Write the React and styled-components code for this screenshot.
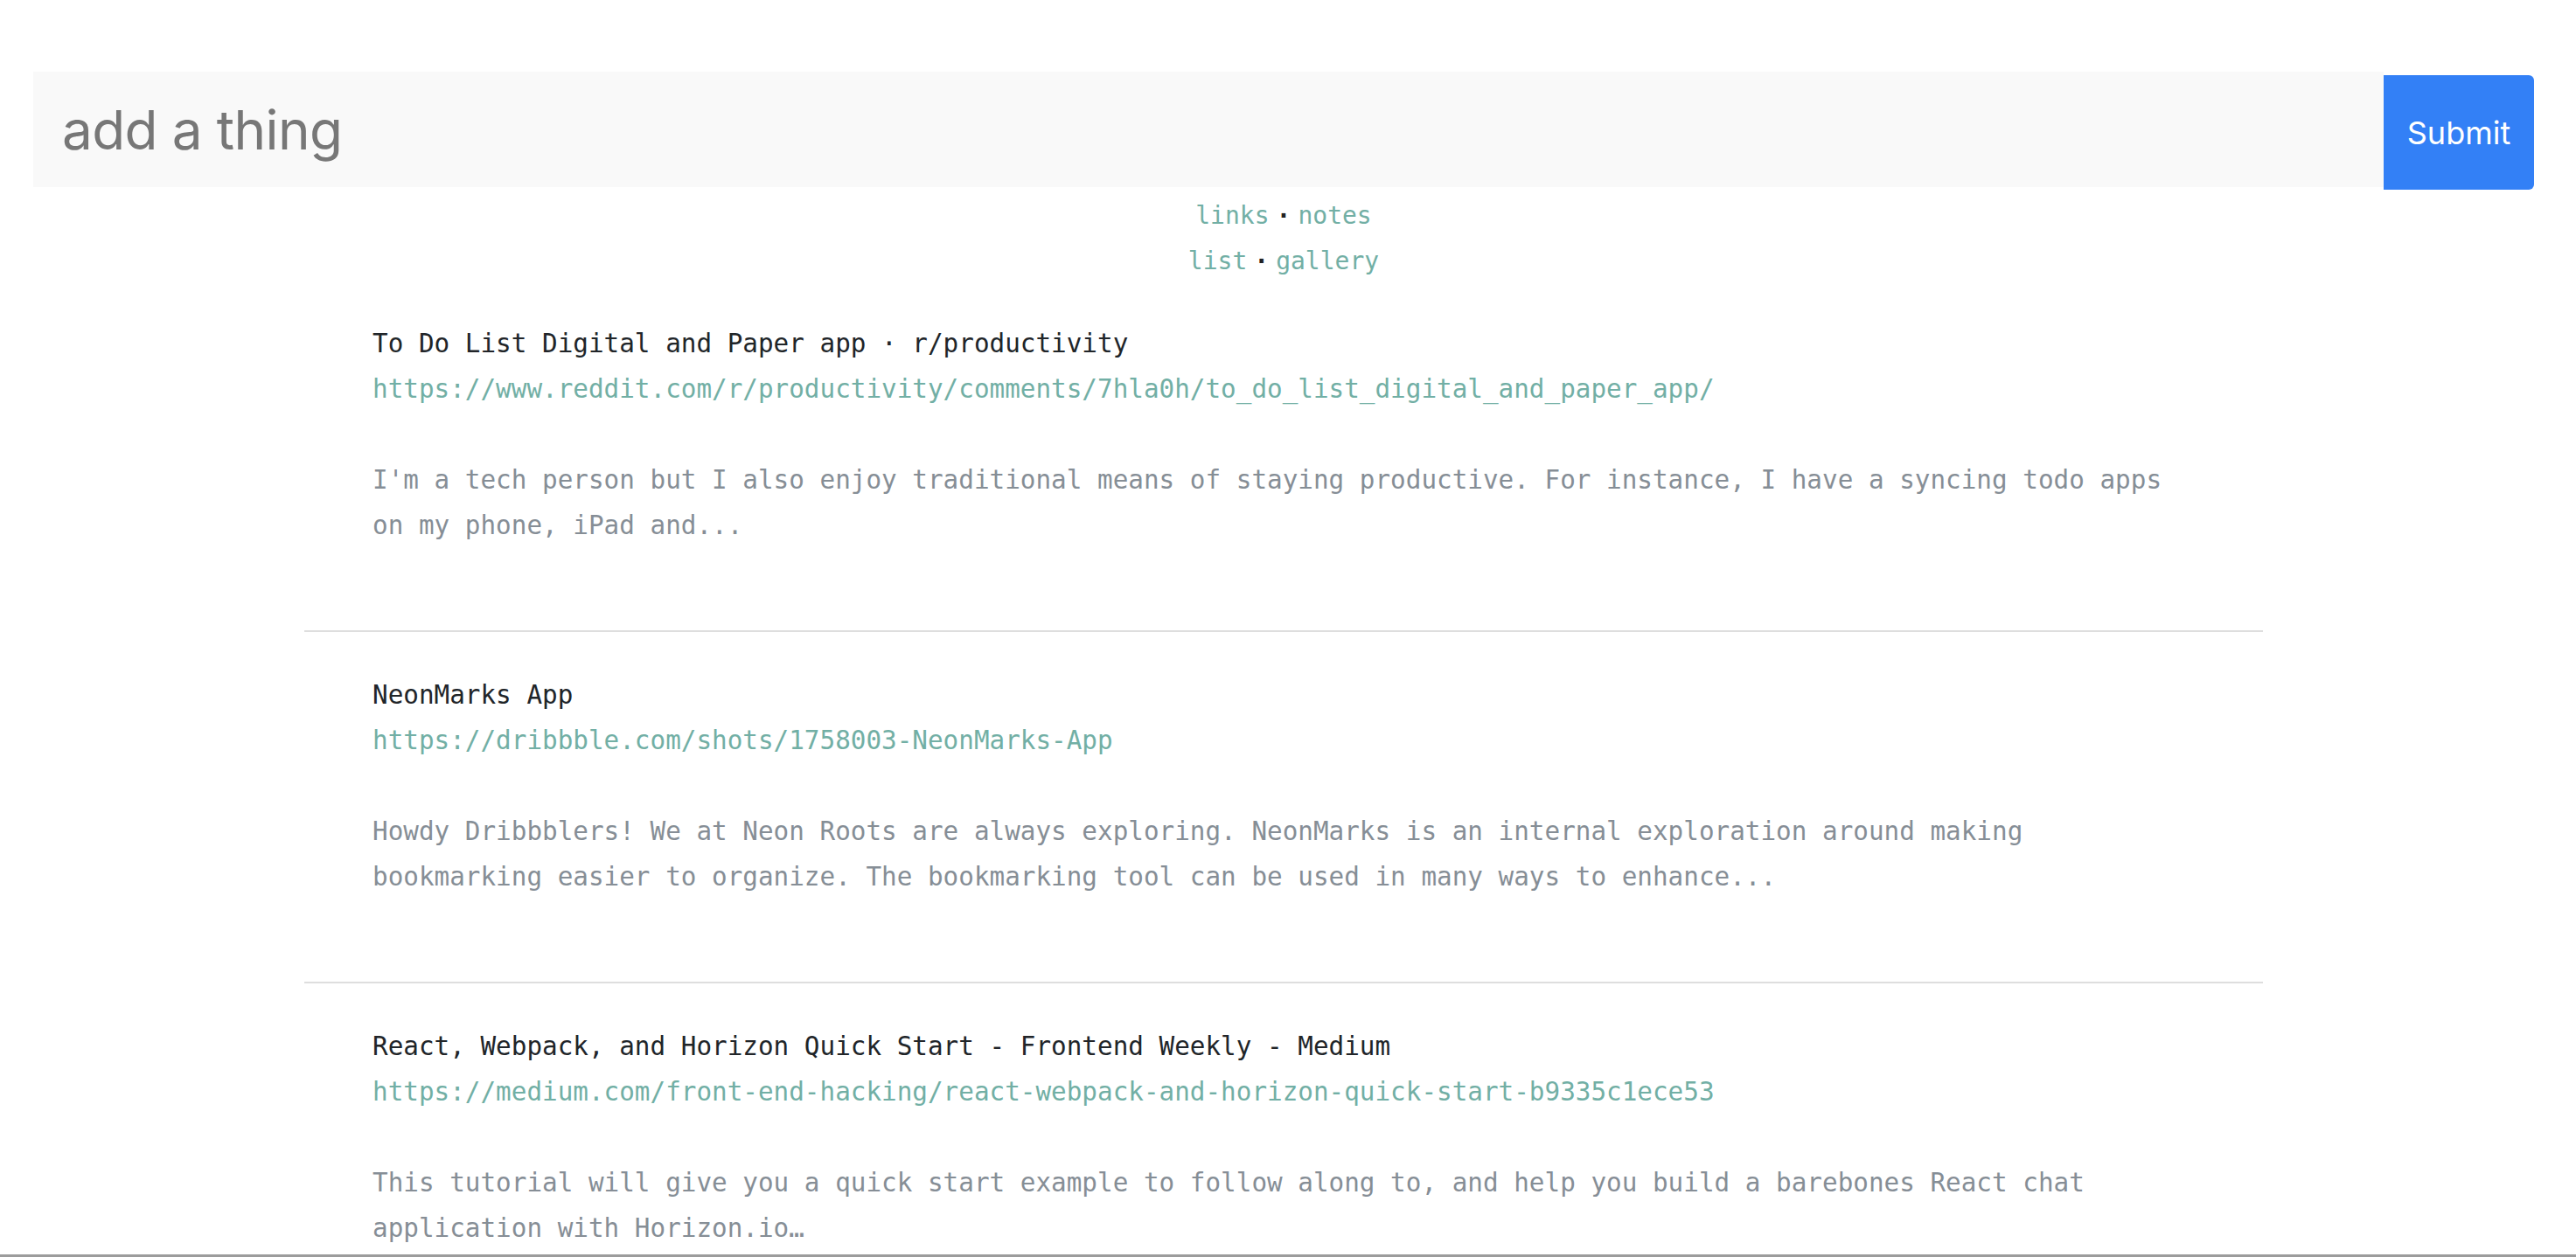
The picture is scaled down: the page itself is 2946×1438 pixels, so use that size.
import styled, { createGlobalStyle } from 'styled-components';

const GlobalStyle = createGlobalStyle`
  body {
    margin: 0;
    background: #fff;
    font-family: "DejaVu Sans Mono", monospace;
  }
`;

const Page = styled.div`
  padding: 82px 48px 0 38px;
`;

const Form = styled.form`
  display: flex;
  align-items: flex-start;
`;

const Input = styled.input`
  flex: 1;
  min-width: 0;
  height: 132px;
  box-sizing: border-box;
  border: none;
  outline: none;
  background: #f9f9f9;
  padding: 0 33px;
  font-family: Inter, "Liberation Sans", sans-serif;
  font-size: 62px;
  letter-spacing: -0.6px;
  color: #333;

  &::placeholder {
    color: #777;
  }
`;

const Submit = styled.button`
  width: 172px;
  height: 131px;
  margin-top: 4px;
  border: none;
  border-radius: 0 6px 6px 0;
  background: #3380f6;
  color: #fff;
  font-family: Inter, "Liberation Sans", sans-serif;
  font-size: 36px;
`;

const Nav = styled.nav`
  padding-top: 4px;
  margin-bottom: -4px;
  text-align: center;
  font-size: 28px;
  line-height: 52px;
`;

const NavLink = styled.a`
  color: #72afa5;
  text-decoration: none;
`;

const Dot = styled.span`
  color: #222;
  font-weight: bold;
  margin: 0 8px;
`;

const List = styled.ul`
  list-style: none;
  margin: 0 auto;
  padding: 0;
  width: 2240px;
  font-size: 29.3px;
  line-height: 52px;
`;

const Item = styled.li`
  padding: 46px 78px 94px;
  border-bottom: 2px solid #dedede;
`;

const Title = styled.div`
  color: #212529;
`;

const Url = styled.a`
  display: block;
  color: #72afa5;
  text-decoration: none;
`;

const Desc = styled.p`
  margin: 52px 0 0;
  color: #868e96;
`;

const BottomEdge = styled.div`
  position: fixed;
  left: 0;
  right: 0;
  bottom: 0;
  height: 3px;
  background: #9c9c9c;
`;

const items = [
  {
    title: 'To Do List Digital and Paper app · r/productivity',
    url: 'https://www.reddit.com/r/productivity/comments/7hla0h/to_do_list_digital_and_paper_app/',
    desc: "I'm a tech person but I also enjoy traditional means of staying productive. For instance, I have a syncing todo apps on my phone, iPad and...",
  },
  {
    title: 'NeonMarks App',
    url: 'https://dribbble.com/shots/1758003-NeonMarks-App',
    desc: 'Howdy Dribbblers! We at Neon Roots are always exploring. NeonMarks is an internal exploration around making bookmarking easier to organize. The bookmarking tool can be used in many ways to enhance...',
  },
  {
    title: 'React, Webpack, and Horizon Quick Start - Frontend Weekly - Medium',
    url: 'https://medium.com/front-end-hacking/react-webpack-and-horizon-quick-start-b9335c1ece53',
    desc: 'This tutorial will give you a quick start example to follow along to, and help you build a barebones React chat application with Horizon.io…',
  },
];

export default function App() {
  return (
    <>
      <GlobalStyle />
      <Page>
        <Form onSubmit={e => e.preventDefault()}>
          <Input placeholder="add a thing" />
          <Submit type="submit">Submit</Submit>
        </Form>
        <Nav>
          <div>
            <NavLink href="#">links</NavLink><Dot>·</Dot><NavLink href="#">notes</NavLink>
          </div>
          <div>
            <NavLink href="#">list</NavLink><Dot>·</Dot><NavLink href="#">gallery</NavLink>
          </div>
        </Nav>
        <List>
          {items.map(item => (
            <Item key={item.url}>
              <Title>{item.title}</Title>
              <Url href={item.url}>{item.url}</Url>
              <Desc>{item.desc}</Desc>
            </Item>
          ))}
        </List>
      </Page>
      <BottomEdge />
    </>
  );
}
